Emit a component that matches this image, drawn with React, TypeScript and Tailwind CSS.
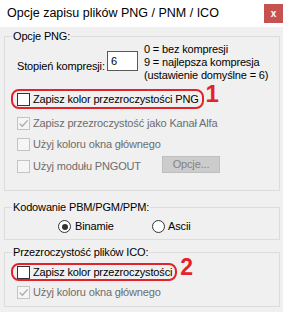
import React from 'react';

type BoxProps = { checked?: boolean; disabled?: boolean };

function CheckBox({ checked, disabled }: BoxProps) {
  return (
    <span
      className={
        disabled
          ? 'w-[13px] h-[13px] shrink-0 border border-[#c4c4c4] bg-[#f5f5f5] flex items-center justify-center'
          : 'w-[13px] h-[13px] shrink-0 border border-[#333333] bg-white flex items-center justify-center'
      }
    >
      {checked && (
        <svg width="11" height="11" viewBox="0 0 11 11">
          <path
            d="M1.6 5.6 L4.3 8.3 L9.6 2.4"
            stroke={disabled ? '#a9a9a9' : '#333333'}
            strokeWidth="1.3"
            fill="none"
          />
        </svg>
      )}
    </span>
  );
}

function Radio({ checked }: { checked?: boolean }) {
  return (
    <span className="w-[13px] h-[13px] shrink-0 rounded-full border border-[#333333] bg-white flex items-center justify-center">
      {checked && <span className="w-[6px] h-[6px] rounded-full bg-[#333333]" />}
    </span>
  );
}

function Group({ label, className, children }: { label: string; className: string; children: React.ReactNode }) {
  return (
    <div className={`relative border border-[#dcdcdc] ${className}`}>
      {/* group caption sits over the top border */}
      <span className="absolute left-[7px] top-[-1px] -translate-y-1/2 bg-[#f0f0f0] px-[1px] leading-[14px] text-black whitespace-nowrap">
        {label}
      </span>
      {children}
    </div>
  );
}

export default function App() {
  return (
    <div className="w-[283px] h-[312px] bg-[#f0f0f0] flex flex-col overflow-hidden font-['Liberation_Sans',Arial,sans-serif] text-[11px] tracking-[-0.15px] text-black whitespace-nowrap">
      {/* Title bar */}
      <div className="h-[27px] shrink-0 bg-white flex items-start justify-between">
        <span className="pl-[7px] pt-[6px] text-[12.5px] tracking-normal leading-[15px]">
          Opcje zapisu plików PNG / PNM / ICO
        </span>
        <span className="mt-[4px] w-[19px] h-[19px] bg-[#c75050] text-white font-bold text-[10px] leading-none flex items-center justify-center">
          x
        </span>
      </div>

      <div className="flex flex-col pl-[4px] pr-[3px]">
        {/* Opcje PNG */}
        <Group label="Opcje PNG:" className="mt-[9px] h-[155px] flex flex-col">
          <div className="mt-[6px] flex items-start">
            <div className="pl-[12px] w-[102px] mt-[17px] leading-[13px]">Stopień kompresji:</div>
            <div className="mt-[8px] w-[31px] h-[20px] border border-[#5a5a5a] bg-white pl-[3px] pt-[2px] leading-[14px]">
              6
            </div>
            <div className="ml-[6px] flex flex-col leading-[13px]">
              <span>0 = bez kompresji</span>
              <span>9 = najlepsza kompresja</span>
              <span>(ustawienie domyślne = 6)</span>
            </div>
          </div>

          <div className="mt-[7px] flex items-start">
            <div className="ml-[6px] h-[20px] rounded-[8px] border-2 border-[#e3222b] pl-[4px] pr-[3px] flex items-center gap-[3px]">
              <CheckBox />
              <span>Zapisz kolor przezroczystości PNG</span>
            </div>
            <span className="ml-[2px] mt-[-7px] text-[24px] font-bold leading-none tracking-normal text-[#e3222b]">1</span>
          </div>

          <div className="mt-[4px] h-[20px] pl-[12px] flex items-center gap-[3px] text-[#6d6d6d]">
            <CheckBox checked disabled />
            <span>Zapisz przezroczystość jako Kanał Alfa</span>
          </div>
          <div className="mt-[1px] h-[20px] pl-[12px] flex items-center gap-[3px] text-[#6d6d6d]">
            <CheckBox disabled />
            <span>Użyj koloru okna głównego</span>
          </div>
          <div className="mt-[2px] h-[20px] pl-[12px] flex items-center gap-[3px] text-[#6d6d6d]">
            <CheckBox disabled />
            <span className="w-[126px]">Użyj modułu PNGOUT</span>
            <span className="w-[58px] h-[17px] -mt-[3px] border border-[#bfbfbf] bg-[#cccccc] text-[#838383] flex items-center justify-center">
              Opcje...
            </span>
          </div>
        </Group>

        {/* Kodowanie */}
        <Group label="Kodowanie PBM/PGM/PPM:" className="mt-[16px] h-[33px] flex items-center pt-[6px]">
          <div className="pl-[53px] flex items-center">
            <Radio checked />
            <span className="ml-[4px] w-[77px]">Binamie</span>
            <Radio />
            <span className="ml-[3px]">Ascii</span>
          </div>
        </Group>

        {/* ICO */}
        <Group label="Przezroczystość plików ICO:" className="mt-[12px] h-[55px] flex flex-col">
          <div className="mt-[10px] flex items-start">
            <div className="ml-[6px] h-[18px] rounded-[8px] border-2 border-[#e3222b] pl-[4px] pr-[3px] flex items-center gap-[3px]">
              <CheckBox />
              <span>Zapisz kolor przezroczystości</span>
            </div>
            <span className="ml-[3px] mt-[-7px] text-[23px] font-bold leading-none tracking-normal text-[#e3222b]">2</span>
          </div>
          <div className="mt-[1px] h-[20px] pl-[12px] flex items-center gap-[3px] text-[#6d6d6d]">
            <CheckBox checked disabled />
            <span>Użyj koloru okna głównego</span>
          </div>
        </Group>
      </div>
    </div>
  );
}
